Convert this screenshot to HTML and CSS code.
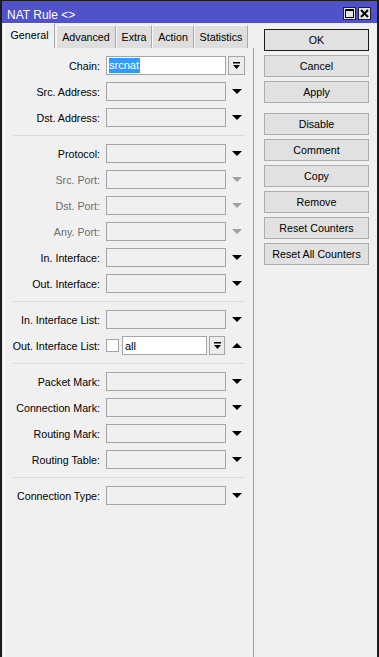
FILE: index.html
```html
<!DOCTYPE html>
<html lang="en">
<head>
    <meta charset="UTF-8">
    <meta name="viewport" content="width=device-width, initial-scale=1.0">
    <title>NAT Rule</title>
    <link rel="stylesheet" href="styles.css">
</head>
<body>
<div class="window">
    <div class="titlebar">
        <span class="title">NAT Rule &lt;&gt;</span>
        <div class="title-buttons">
            <span class="tbtn">
                <svg width="9" height="9" viewBox="0 0 9 9"><rect x="0.5" y="0.5" width="8" height="8" fill="none" stroke="#000"/><rect x="0" y="0" width="9" height="2" fill="#000"/></svg>
            </span>
            <span class="tbtn">
                <svg width="9" height="9" viewBox="0 0 9 9"><path d="M1 1 L8 8 M8 1 L1 8" stroke="#000" stroke-width="2"/></svg>
            </span>
        </div>
    </div>

    <div class="main">
        <div class="tabs-area">
            <div class="tab-strip">
                <div class="tab active tab-general">General</div>
                <div class="tab tab-advanced">Advanced</div>
                <div class="tab tab-extra">Extra</div>
                <div class="tab tab-action">Action</div>
                <div class="tab tab-statistics">Statistics</div>
            </div>

            <div class="panel">
                <div class="form">
                    <div class="row">
                        <label class="lbl">Chain:</label>
                        <div class="field white"><span class="sel">srcnat</span></div>
                        <div class="dd-btn">
                            <svg width="7" height="7" viewBox="0 0 7 7"><rect x="0" y="0" width="7" height="1.5" fill="#000"/><polygon points="0,3 7,3 3.5,7" fill="#000"/></svg>
                        </div>
                    </div>
                    <div class="row">
                        <label class="lbl">Src. Address:</label>
                        <div class="field"></div>
                        <div class="arrow"><svg width="10" height="5" viewBox="0 0 10 5"><polygon points="0,0 10,0 5,5" fill="#000"/></svg></div>
                    </div>
                    <div class="row">
                        <label class="lbl">Dst. Address:</label>
                        <div class="field"></div>
                        <div class="arrow"><svg width="10" height="5" viewBox="0 0 10 5"><polygon points="0,0 10,0 5,5" fill="#000"/></svg></div>
                    </div>

                    <div class="sep"></div>

                    <div class="row">
                        <label class="lbl">Protocol:</label>
                        <div class="field"></div>
                        <div class="arrow"><svg width="10" height="5" viewBox="0 0 10 5"><polygon points="0,0 10,0 5,5" fill="#000"/></svg></div>
                    </div>
                    <div class="row disabled">
                        <label class="lbl">Src. Port:</label>
                        <div class="field"></div>
                        <div class="arrow"><svg width="10" height="5" viewBox="0 0 10 5"><polygon points="0,0 10,0 5,5"/></svg></div>
                    </div>
                    <div class="row disabled">
                        <label class="lbl">Dst. Port:</label>
                        <div class="field"></div>
                        <div class="arrow"><svg width="10" height="5" viewBox="0 0 10 5"><polygon points="0,0 10,0 5,5"/></svg></div>
                    </div>
                    <div class="row disabled">
                        <label class="lbl">Any. Port:</label>
                        <div class="field"></div>
                        <div class="arrow"><svg width="10" height="5" viewBox="0 0 10 5"><polygon points="0,0 10,0 5,5"/></svg></div>
                    </div>
                    <div class="row">
                        <label class="lbl">In. Interface:</label>
                        <div class="field"></div>
                        <div class="arrow"><svg width="10" height="5" viewBox="0 0 10 5"><polygon points="0,0 10,0 5,5" fill="#000"/></svg></div>
                    </div>
                    <div class="row">
                        <label class="lbl">Out. Interface:</label>
                        <div class="field"></div>
                        <div class="arrow"><svg width="10" height="5" viewBox="0 0 10 5"><polygon points="0,0 10,0 5,5" fill="#000"/></svg></div>
                    </div>

                    <div class="sep"></div>

                    <div class="row">
                        <label class="lbl">In. Interface List:</label>
                        <div class="field"></div>
                        <div class="arrow"><svg width="10" height="5" viewBox="0 0 10 5"><polygon points="0,0 10,0 5,5" fill="#000"/></svg></div>
                    </div>
                    <div class="row">
                        <label class="lbl">Out. Interface List:</label>
                        <span class="check"></span>
                        <div class="field white short"><span class="val">all</span></div>
                        <div class="dd-btn small">
                            <svg width="7" height="7" viewBox="0 0 7 7"><rect x="0" y="0" width="7" height="1.5" fill="#000"/><polygon points="0,3 7,3 3.5,7" fill="#000"/></svg>
                        </div>
                        <div class="arrow up"><svg width="10" height="5" viewBox="0 0 10 5"><polygon points="0,5 10,5 5,0" fill="#000"/></svg></div>
                    </div>

                    <div class="sep"></div>

                    <div class="row">
                        <label class="lbl">Packet Mark:</label>
                        <div class="field"></div>
                        <div class="arrow"><svg width="10" height="5" viewBox="0 0 10 5"><polygon points="0,0 10,0 5,5" fill="#000"/></svg></div>
                    </div>
                    <div class="row">
                        <label class="lbl">Connection Mark:</label>
                        <div class="field"></div>
                        <div class="arrow"><svg width="10" height="5" viewBox="0 0 10 5"><polygon points="0,0 10,0 5,5" fill="#000"/></svg></div>
                    </div>
                    <div class="row">
                        <label class="lbl">Routing Mark:</label>
                        <div class="field"></div>
                        <div class="arrow"><svg width="10" height="5" viewBox="0 0 10 5"><polygon points="0,0 10,0 5,5" fill="#000"/></svg></div>
                    </div>
                    <div class="row">
                        <label class="lbl">Routing Table:</label>
                        <div class="field"></div>
                        <div class="arrow"><svg width="10" height="5" viewBox="0 0 10 5"><polygon points="0,0 10,0 5,5" fill="#000"/></svg></div>
                    </div>

                    <div class="sep"></div>

                    <div class="row">
                        <label class="lbl">Connection Type:</label>
                        <div class="field"></div>
                        <div class="arrow"><svg width="10" height="5" viewBox="0 0 10 5"><polygon points="0,0 10,0 5,5" fill="#000"/></svg></div>
                    </div>
                </div>
            </div>
        </div>

        <div class="actions">
            <div class="btn default">OK</div>
            <div class="btn">Cancel</div>
            <div class="btn group-end">Apply</div>
            <div class="btn">Disable</div>
            <div class="btn">Comment</div>
            <div class="btn">Copy</div>
            <div class="btn">Remove</div>
            <div class="btn">Reset Counters</div>
            <div class="btn">Reset All Counters</div>
        </div>
    </div>
</div>
</body>
</html>
```

FILE: styles.css
```css
* {
    box-sizing: border-box;
}

body {
    margin: 0;
    font-family: "Liberation Sans", Arial, sans-serif;
    font-size: 11px;
    color: #000;
}

.window {
    width: 379px;
    height: 657px;
    background-color: #f0f0f0;
    border: 2px solid #1c1c1c;
    border-top-width: 1px;
    border-bottom: 0;
    display: flex;
    flex-direction: column;
    overflow: hidden;
}

/* title bar */
.titlebar {
    height: 22px;
    flex-shrink: 0;
    background-color: #4f52c9;
    color: #fff;
    display: flex;
    align-items: center;
    justify-content: space-between;
    padding: 0 6px 0 5px;
}

.title {
    font-size: 12px;
    margin-top: 5px;
}

.title-buttons {
    display: flex;
    gap: 2px;
    margin-top: 3px;
}

.tbtn {
    width: 13px;
    height: 13px;
    background-color: #e4e4e4;
    border: 1px solid #222;
    display: flex;
    align-items: center;
    justify-content: center;
}

/* body */
.main {
    flex: 1;
    display: flex;
}

.tabs-area {
    width: 250px;
    margin-left: 2px;
    display: flex;
    flex-direction: column;
}

.tab-strip {
    height: 25px;
    display: flex;
    align-items: flex-end;
}

.tab {
    height: 23px;
    background-color: #dedede;
    border-top: 1px solid #f7f7f7;
    border-left: 1px solid #f7f7f7;
    border-right: 1px solid #a9a9a9;
    display: flex;
    align-items: center;
    justify-content: center;
    font-size: 10.7px;
}

.tab.active {
    height: 25px;
    background-color: #f0f0f0;
    border-top-color: #fff;
    border-left-color: #fff;
    padding-bottom: 3px;
}

.tab-general { width: 51px; margin-right: 1px; }
.tab-advanced { width: 60px; }
.tab-extra { width: 36px; }
.tab-action { width: 42px; }
.tab-statistics { width: 54px; }

.panel {
    flex: 1;
    border-left: 1px solid #fff;
    border-right: 1px solid #a0a0a0;
    padding-top: 8px;
}

.form {
    display: flex;
    flex-direction: column;
    gap: 7px;
}

.row {
    height: 19px;
    display: flex;
    align-items: center;
}

.lbl {
    width: 95px;
    margin-right: 6px;
    text-align: right;
    white-space: nowrap;
    font-size: 10.7px;
}

.field {
    width: 120px;
    height: 19px;
    border: 1px solid #a5a5a5;
    display: flex;
    align-items: center;
}

.field.white {
    background-color: #fff;
}

.field.short {
    width: 85px;
}

.sel {
    margin-left: 2px;
    height: 15px;
    line-height: 15px;
    padding: 0 1px 0 0;
    background-color: #3399ff;
    color: #fff;
}

.val {
    margin-left: 2px;
}

.dd-btn {
    width: 17px;
    height: 19px;
    margin-left: 2px;
    border: 1px solid #a5a5a5;
    background-color: #ececec;
    display: flex;
    align-items: center;
    justify-content: center;
}

.dd-btn.small {
    width: 16px;
}

.arrow {
    width: 17px;
    margin-left: 2px;
    display: flex;
    justify-content: center;
}

.arrow.up {
    margin-left: 3px;
}

.check {
    width: 13px;
    height: 13px;
    background-color: #fff;
    border: 1px solid #a5a5a5;
    margin-right: 3px;
}

.disabled .lbl {
    color: #6d6d6d;
}

.disabled .arrow svg {
    fill: #a0a0a0;
}

.sep {
    height: 1px;
    margin: 1px 8px;
    background-color: #d9d9d9;
}

/* buttons on the right */
.actions {
    width: 105px;
    margin-left: 10px;
    padding-top: 6px;
    display: flex;
    flex-direction: column;
    gap: 4px;
}

.btn {
    height: 22px;
    background-color: #e1e1e1;
    border: 1px solid #adadad;
    display: flex;
    align-items: center;
    justify-content: center;
    font-size: 10.7px;
}

.btn.default {
    border-color: #1a1a1a;
}

.btn.group-end {
    margin-bottom: 6px;
}
```
